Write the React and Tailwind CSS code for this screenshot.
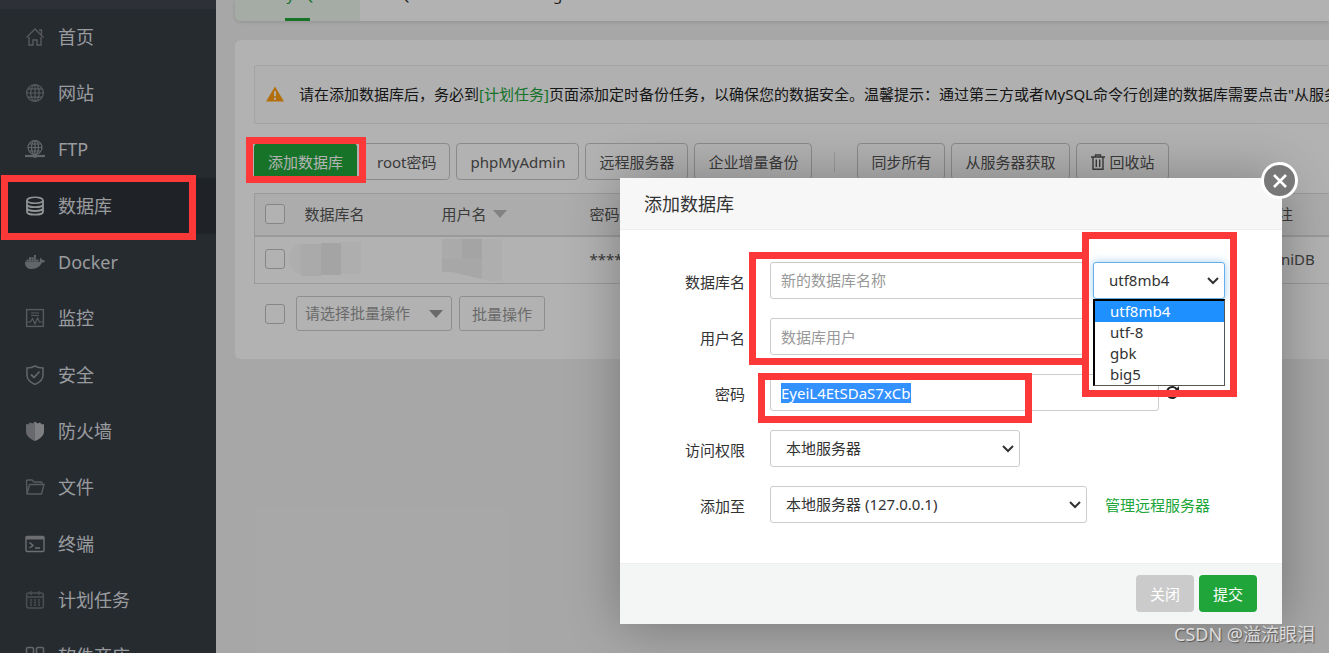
import React, { useState } from 'react';
import { FaDocker } from 'react-icons/fa';
import clsx from 'clsx';

const Svg = ({ children, size = 20 }) => (
  <svg width={size} height={size} viewBox="0 0 20 20" fill="none" stroke="currentColor" strokeWidth="1.2">
    {children}
  </svg>
);

const HomeIcon = () => (
  <Svg>
    <path d="M1.5 10.5 10 2l8.500 8.500M14 3h2.500v4.500M4 10v8h4v-5h4v5h4v-8" strokeWidth="1.400" />
  </Svg>
);

const GlobeIcon = () => (
  <Svg>
    <circle cx="10" cy="10" r="8.400" />
    <ellipse cx="10" cy="10" rx="4.200" ry="8.400" />
    <path d="M10 1.600v16.800M1.600 10h16.800M3 5.800h14M3 14.200h14" />
  </Svg>
);

const FtpIcon = () => (
  <Svg>
    <circle cx="10" cy="8.500" r="7" />
    <ellipse cx="10" cy="8.500" rx="3.500" ry="7" />
    <path d="M10 1.500v14M3 8.500h14M4.500 5h11M4.500 12h11" />
    <path d="M0 17h20" strokeWidth="2.200" />
    <circle cx="10" cy="17" r="2" fill="currentColor" stroke="none" />
  </Svg>
);

const DatabaseIcon = () => (
  <Svg>
    <ellipse cx="10" cy="4.300" rx="8" ry="3" strokeWidth="1.600" />
    <path
      d="M2 4.300v11.400c0 1.700 3.600 3 8 3s8-1.300 8-3V4.300M2 8.200c0 1.700 3.600 3 8 3s8-1.300 8-3M2 12c0 1.700 3.600 3 8 3s8-1.300 8-3"
      strokeWidth="1.800"
    />
  </Svg>
);

const MonitorIcon = () => (
  <Svg>
    <rect x="1.600" y="1.600" width="16.800" height="16.800" strokeWidth="1.400" />
    <path d="M6 5h8M6 7.500h8M2 14h3.500l2-3.500L10 16l2.500-6 2 4H18" />
  </Svg>
);

const ShieldCheckIcon = () => (
  <Svg>
    <path d="M10 1c2.500 1.500 5 2 8 2v7c0 4.500-3.500 7.500-8 9.400C5.500 17.500 2 14.500 2 10V3c3 0 5.500-.5 8-2Z" strokeWidth="1.500" />
    <path d="m6 9.500 3 3 5.500-6" strokeWidth="1.800" />
  </Svg>
);

const ShieldIcon = () => (
  <Svg>
    <path d="M10 .5 7.500 2.500 5 1.500 3 3.500 1 3v7.500c0 4 4 7.500 9 9.500Z" fill="currentColor" stroke="none" opacity=".75" />
    <path d="m10 .5 2.500 2 2.500-1 2 2L19 3v7.500c0 4-4 7.500-9 9.500Z" fill="currentColor" stroke="none" />
  </Svg>
);

const FolderIcon = () => (
  <Svg>
    <path d="M4.500 7.500H19l-2.500 9.500H2L1.500 4c0-.6.4-1 1-1H7l2 2h7c.6 0 1 .4 1 1v1.500M4.500 7.500 2 17" strokeWidth="1.400" />
  </Svg>
);

const TerminalIcon = () => (
  <Svg>
    <rect x="1" y="2.500" width="18" height="15" rx="1" strokeWidth="1.400" />
    <path d="M1 4h18" strokeWidth="3" />
    <path d="m4.500 8.500 3.500 3-3.500 2.500M10 14h5" strokeWidth="1.500" />
  </Svg>
);

const CalendarIcon = () => (
  <Svg>
    <rect x="1.600" y="3" width="16.800" height="15" rx="2" strokeWidth="1.400" />
    <path d="M6 1v4M14 1v4M2 7h16" strokeWidth="1.400" />
    <path d="M5 10h10M5 12.500h10M5 15h10" strokeDasharray="2 2" strokeWidth="1.500" />
  </Svg>
);

const AppsIcon = () => (
  <Svg>
    <rect x="1.500" y="1.500" width="7" height="7" rx="1.500" strokeWidth="1.600" />
    <rect x="11.500" y="1.500" width="7" height="7" rx="1.500" strokeWidth="1.600" />
    <rect x="1.500" y="11.500" width="7" height="7" rx="1.500" strokeWidth="1.600" />
    <rect x="11.500" y="11.500" width="7" height="7" rx="1.500" strokeWidth="1.600" />
  </Svg>
);

const menu = [
  { name: '首页', icon: HomeIcon, tone: 'text-[#7e8286]' },
  { name: '网站', icon: GlobeIcon, tone: 'text-[#7e8286]' },
  { name: 'FTP', icon: FtpIcon, tone: 'text-[#8f9396]' },
  { name: '数据库', icon: DatabaseIcon, tone: 'text-[#d0d2d4]', active: true },
  { name: 'Docker', icon: () => <FaDocker size={20} />, tone: 'text-[#8f9396]' },
  { name: '监控', icon: MonitorIcon, tone: 'text-[#7e8286]' },
  { name: '安全', icon: ShieldCheckIcon, tone: 'text-[#8f9396]' },
  { name: '防火墙', icon: ShieldIcon, tone: 'text-[#b4b6b8]' },
  { name: '文件', icon: FolderIcon, tone: 'text-[#7e8286]' },
  { name: '终端', icon: TerminalIcon, tone: 'text-[#9b9ea1]' },
  { name: '计划任务', icon: CalendarIcon, tone: 'text-[#6e7377]' },
  { name: '软件商店', icon: AppsIcon, tone: 'text-[#8f9396]' },
];

const charsets = ['utf8mb4', 'utf-8', 'gbk', 'big5'];

const Sidebar = () => (
  <aside className="w-[216px] shrink-0 bg-[#373e46] border-t-[9px] border-[#41464f]">
    <nav className="grid grid-rows-12 h-[676px]">
      {menu.map(({ name, icon: Icon, tone, active }) => (
        <a
          key={name}
          href="#"
          className={clsx('flex items-center gap-[13px] pb-px pl-[25px] text-lg text-[#dcdee0]', active && 'bg-[#2d3238]')}
        >
          <span className={clsx('flex w-5 justify-center', tone)}>
            <Icon />
          </span>
          {name}
        </a>
      ))}
    </nav>
  </aside>
);

const ToolButton = ({ children, primary }) => (
  <button
    type="button"
    className={clsx(
      'flex h-[37px] items-center gap-1 rounded border px-[13px]',
      primary ? 'border-[#20a53a] bg-[#20a53a] text-white' : 'border-[#c8c8c8] bg-white text-[#555]'
    )}
  >
    {children}
  </button>
);

const Check = ({ label }) => (
  <input
    type="checkbox"
    aria-label={label}
    className="block size-5 shrink-0 appearance-none rounded-[3px] border border-[#c0c0c0] bg-white"
  />
);

const Triangle = ({ className }) => (
  <svg width="14" height="8" viewBox="0 0 14 8" fill="currentColor" className={className}>
    <path d="M0 0h14L7 8Z" />
  </svg>
);

const SelectBox = ({ id, label, options, className, focused }) => (
  <div className={clsx('relative', className)}>
    <select
      id={id}
      aria-label={label}
      className={clsx(
        'h-[37px] w-full appearance-none rounded-[3px] border bg-white pb-[2px] pl-[15px] outline-none',
        focused ? 'border-[#66afe9] shadow-[0_0_8px_rgba(102,175,233,0.6)]' : 'border-[#ccc]'
      )}
    >
      {options.map((o) => <option key={o}>{o}</option>)}
    </select>
    <svg
      width="12" height="8" viewBox="0 0 12 8" fill="none" stroke="#333" strokeWidth="2"
      className="pointer-events-none absolute right-[6px] top-[15px]"
    >
      <path d="m1 1 5 5 5-5" />
    </svg>
  </div>
);

const Row = ({ id, label, children }) => (
  <div className="flex items-start">
    <label htmlFor={id} className="w-[125px] shrink-0 text-right leading-10">{label}</label>
    <div className="flex h-[37px] items-center pl-[25px]">{children}</div>
  </div>
);

// red frame drawn over the controls it points at
const Mark = ({ className }) => (
  <div className={clsx('pointer-events-none absolute border-[7px] border-[#fc3838]', className)} />
);

const DatabasePanel = () => (
  <section className="mt-[19px] rounded-l-md bg-white pl-[19px] pt-[25px] pb-7 text-[#555]">
    <div className="flex h-[59px] items-center overflow-hidden whitespace-nowrap rounded-l-[3px] border-y border-l border-[#ebebeb] bg-[#fcfcfc] pb-[2px] pl-[11px] text-[#222]">
      <svg width="18" height="16" viewBox="0 0 19 16" className="mr-[15px] shrink-0">
        <path d="M9.500 0 19 16H0Z" fill="#ff9f12" />
        <path d="M9.500 5v5.500M9.500 12v2" stroke="#fff" strokeWidth="2" />
      </svg>
      <p>
        请在添加数据库后，务必到<a href="#" className="text-[#20a53a]">[计划任务]</a>
        页面添加定时备份任务，以确保您的数据安全。温馨提示：通过第三方或者MySQL命令行创建的数据库需要点击"从服务器获取"
      </p>
    </div>

    <div className="mt-[19px] flex items-center gap-[6px] whitespace-nowrap">
      <ToolButton primary>添加数据库</ToolButton>
      <ToolButton>root密码</ToolButton>
      <ToolButton>phpMyAdmin</ToolButton>
      <ToolButton>远程服务器</ToolButton>
      <ToolButton>企业增量备份</ToolButton>
      <span className="mx-4 h-5 w-px bg-[#ddd]" />
      <ToolButton>同步所有</ToolButton>
      <ToolButton>从服务器获取</ToolButton>
      <ToolButton>
        <svg width="16" height="16" viewBox="0 0 16 16" fill="none" stroke="currentColor" strokeWidth="1.400">
          <path d="M1 3h14M5.500 3V1h5v2M3 3v12.300h10V3M6.300 5.500V13M9.700 5.500V13" />
        </svg>
        回收站
      </ToolButton>
    </div>

    <table className="mt-[13px] w-full table-fixed border-collapse border-y border-l border-[#ddd] text-left">
      <colgroup>
        <col className="w-[50px]" />
        <col className="w-[137px]" />
        <col className="w-[148px]" />
        <col />
        <col className="w-[66px]" />
      </colgroup>
      <thead className="border-b-2 border-[#ddd] bg-[#f6f6f6]">
        <tr className="h-[42px]">
          <th className="pl-[10px]"><Check label="全选" /></th>
          <th className="font-normal">数据库名</th>
          <th className="font-normal">
            <span className="flex items-center gap-[6px]">用户名<Triangle className="text-[#bbb]" /></span>
          </th>
          <th className="font-normal">密码</th>
          <th className="font-normal">备注</th>
        </tr>
      </thead>
      <tbody>
        <tr className="h-12">
          <td className="pb-[2px] pl-[10px]"><Check label="选择数据库" /></td>
          <td className="pb-[2px]">
            <svg width="74" height="34" viewBox="0 0 74 34" className="-ml-4">
              <path d="M0 17C0 8 4 2 12 1v32C4 31 0 25 0 17Z" fill="#fafafa" />
              <path d="M12 2h20v32H12Z" fill="#f4f4f4" />
              <path d="M32 1h20v32H32Z" fill="#ebebeb" />
              <path d="M52 0h20v32H52Z" fill="#fafafa" />
            </svg>
          </td>
          <td>
            <svg width="60" height="42" viewBox="0 0 60 42">
              <path d="M0 0h20v33H0Z" fill="#f4f4f4" />
              <path d="M0 20h40v20L10 33H0Z" fill="#efefef" />
              <path d="M20 0h20v20H20Z" fill="#ebebeb" />
              <path d="M40 0h20v42H48l-8-2Z" fill="#f9f9f9" />
            </svg>
          </td>
          <td className="pb-[2px]">**********</td>
          <td className="pb-[2px]">miniDB</td>
        </tr>
      </tbody>
    </table>

    <div className="mt-3 flex items-center pl-[11px] text-[#999]">
      <Check label="批量选择" />
      <div className="relative ml-[11px] w-[156px]">
        <select aria-label="批量操作" className="h-[35px] w-full appearance-none rounded-[3px] border border-[#ccc] bg-white pb-[2px] pl-2">
          <option>请选择批量操作</option>
        </select>
        <Triangle className="pointer-events-none absolute right-[9px] top-[14px]" />
      </div>
      <button type="button" className="ml-[7px] h-[35px] rounded-[3px] border border-[#ccc] px-3">批量操作</button>
    </div>
  </section>
);

const AddDatabaseDialog = () => {
  const [charset, setCharset] = useState('utf8mb4');

  return (
    <div
      role="dialog"
      aria-label="添加数据库"
      className="absolute left-[620px] top-[178px] w-[662px] bg-white text-[#333] shadow-[1px_1px_50px_rgba(0,0,0,0.3)]"
    >
      <h2 className="h-[52px] border-b border-[#eee] bg-[#f7f7f7] pl-6 text-lg leading-[52px]">添加数据库</h2>
      <button
        type="button"
        aria-label="关闭窗口"
        className="absolute -right-4 -top-4 flex size-[37px] items-center justify-center rounded-full border-[3px] border-white bg-[#787878]"
      >
        <svg width="14" height="14" viewBox="0 0 14 14" stroke="#fff" strokeWidth="2.600">
          <path d="m1 1 12 12M13 1 1 13" />
        </svg>
      </button>

      <form className="flex flex-col gap-4 pb-[37px] pt-8">
        <Row id="db-name" label="数据库名">
          <input
            id="db-name"
            placeholder="新的数据库名称"
            className="h-[37px] w-[317px] rounded-[3px] border border-[#ccc] px-[10px] pb-[2px] placeholder:text-[#999]"
          />
          <div className="relative ml-[6px] w-[132px]">
            <SelectBox label="字符集" options={charsets} focused />
            <ul role="listbox" aria-label="字符集选项" className="absolute left-0 top-[37px] z-10 w-full border border-t-2 border-[#555] border-l-2 border-l-black border-t-black bg-white">
              {charsets.map((c) => (
                <li
                  key={c}
                  role="option"
                  aria-selected={c === charset}
                  onClick={() => setCharset(c)}
                  className={clsx('h-[21px] pl-[15px] leading-[21px]', c === charset && 'bg-[#1e90ff] text-white')}
                >
                  {c}
                </li>
              ))}
            </ul>
          </div>
        </Row>
        <Row id="db-user" label="用户名">
          <input
            id="db-user"
            placeholder="数据库用户"
            className="h-[37px] w-[317px] rounded-[3px] border border-[#ccc] px-[10px] placeholder:text-[#999]"
          />
        </Row>
        <Row id="db-password" label="密码">
          <input
            id="db-password"
            defaultValue="EyeiL4EtSDaS7xCb"
            autoFocus
            onFocus={(e) => e.target.select()}
            className="h-[37px] w-[389px] rounded-[3px] border border-[#ccc] px-[10px] outline-none selection:bg-[#3390ff] selection:text-white"
          />
          <button type="button" aria-label="刷新密码" className="ml-[6px]">
            <svg width="15" height="15" viewBox="0 0 15 15" fill="none" stroke="#222" strokeWidth="2">
              <path d="M12.500 9.500A5.500 5.500 0 1 1 12 4.500" />
              <path d="M14 1v5.500H8.500Z" fill="#222" stroke="none" />
            </svg>
          </button>
        </Row>
        <Row id="db-access" label="访问权限">
          <SelectBox id="db-access" options={['本地服务器']} className="w-[250px]" />
        </Row>
        <Row id="db-server" label="添加至">
          <SelectBox id="db-server" options={['本地服务器 (127.0.0.1)']} className="w-[317px]" />
          <a href="#" className="ml-[18px] text-[#20a53a]">管理远程服务器</a>
        </Row>
      </form>

      <div className="flex justify-end gap-[5px] border-t border-[#eee] bg-[#f4f6f6] pb-3 pr-[25px] pt-[11px] text-white">
        <button type="button" className="h-[37px] rounded bg-[#cbcbcb] px-[14px]">关闭</button>
        <button type="button" className="h-[37px] rounded bg-[#20a53a] px-[14px]">提交</button>
      </div>

      <Mark className="left-[129px] top-[74px] h-[113px] w-[340px]" />
      <Mark className="left-[138px] top-[195px] h-[50px] w-[274px]" />
      <Mark className="left-[462px] top-[54px] z-20 h-[165px] w-[155px]" />
    </div>
  );
};

export default function App() {
  return (
    <div className="relative flex h-screen overflow-hidden bg-[#f0f0f1] font-['Noto_Sans','Noto_Sans_CJK_SC',sans-serif] text-[15px] leading-5">
      <Sidebar />

      <main className="min-w-0 flex-1 pl-[19px]">
        <div className="flex h-[21px] items-end overflow-hidden rounded-bl-md bg-white text-[#333] shadow-[0_1px_4px_rgba(0,0,0,0.15)]">
          <a href="#" className="flex w-[125px] flex-col items-center bg-[#ecf6ee] text-[#20a53a]">
            <span className="pb-[14px]">MySQL</span>
            <span className="h-[3px] w-[25px] bg-[#20a53a]" />
          </a>
          <a href="#" className="w-[134px] pb-[17px] text-center">SQLServer</a>
          <a href="#" className="w-[125px] pb-[17px] text-center">MongoDB</a>
        </div>
        <DatabasePanel />
      </main>

      <div className="absolute inset-0 bg-black/30" />

      <AddDatabaseDialog />

      <Mark className="left-px top-[175px] h-[65px] w-[195px]" />
      <Mark className="left-[246px] top-[137px] h-[46px] w-[120px]" />

      <p className="absolute bottom-[7px] right-[14px] text-lg leading-6 text-[#dcdcdc] [text-shadow:1px_1px_1px_#555]">
        CSDN @溢流眼泪
      </p>
    </div>
  );
}
